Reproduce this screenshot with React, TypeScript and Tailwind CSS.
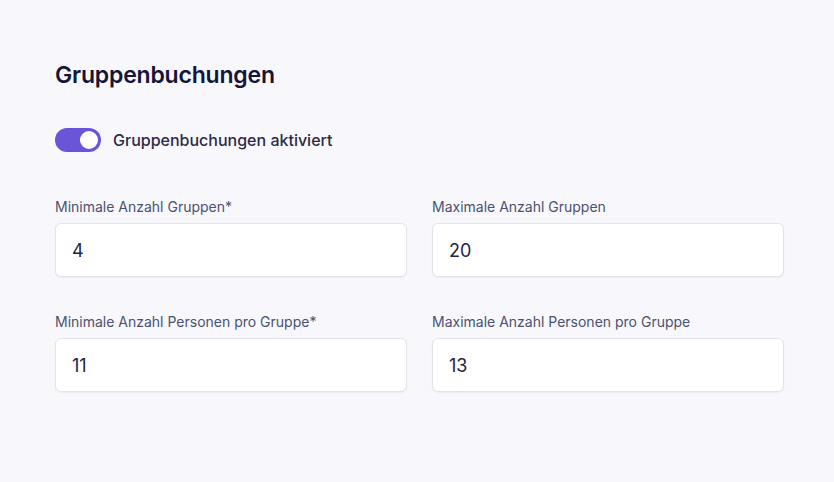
import React from "react";

function Field({ label, value }: { label: string; value: string }) {
  return (
    <div className="flex flex-col">
      <label className="text-[14px] leading-[20px] text-[#4b5170] mb-[6px]">{label}</label>
      <div className="h-[54px] rounded-[6px] bg-white border border-[#e3e3ec] shadow-[0_1px_2px_rgba(20,20,60,0.06)] flex items-center px-[16px]">
        <span className="text-[18px] text-[#232340]">{value}</span>
      </div>
    </div>
  );
}

export default function App() {
  return (
    <div
      className="w-[834px] h-[482px] bg-[#f8f8fc] px-[55px] pt-[60px]"
      style={{ fontFamily: "Inter, 'Noto Sans', sans-serif" }}
    >
      <div className="w-[729px]">
        <h1 className="text-[23px] leading-[30px] font-semibold text-[#15153a] tracking-[-0.2px]">Gruppenbuchungen</h1>
        <div className="flex items-center mt-[38px] gap-[12px]">
          <div className="w-[46px] h-[24px] rounded-full bg-[#6a55d8] relative">
            <div className="absolute right-[3px] top-[3px] w-[18px] h-[18px] rounded-full bg-white" />
          </div>
          <span className="text-[16px] font-medium text-[#2a2a48]">Gruppenbuchungen aktiviert</span>
        </div>
        <div className="grid grid-cols-2 gap-x-[25px] gap-y-[35px] mt-[45px]">
          <Field label="Minimale Anzahl Gruppen*" value="4" />
          <Field label="Maximale Anzahl Gruppen" value="20" />
          <Field label="Minimale Anzahl Personen pro Gruppe*" value="11" />
          <Field label="Maximale Anzahl Personen pro Gruppe" value="13" />
        </div>
      </div>
    </div>
  );
}
